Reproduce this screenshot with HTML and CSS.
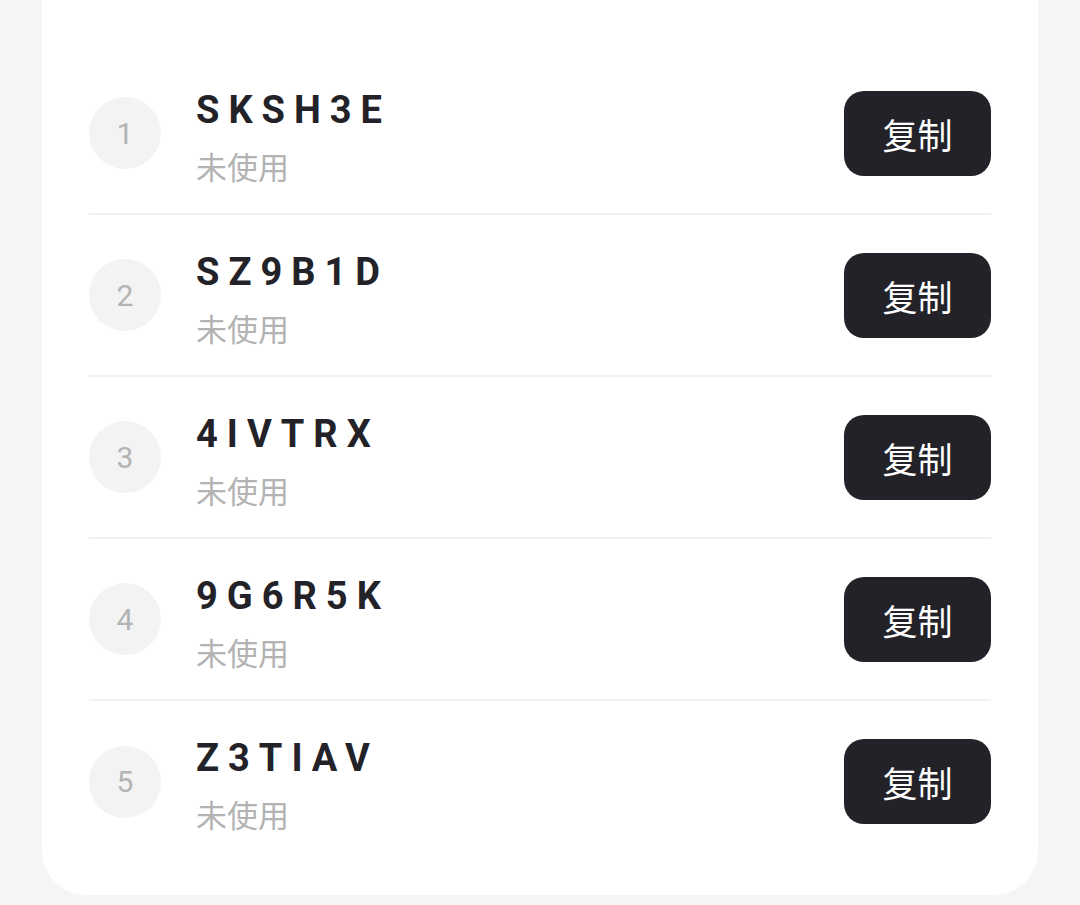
FILE: index.html
```html
<!DOCTYPE html>
<html lang="zh-CN">
<head>
  <meta charset="UTF-8">
  <meta name="viewport" content="width=device-width, initial-scale=1.0">
  <title>兑换码</title>
  <link rel="stylesheet" href="styles.css">
</head>
<body>

  <div class="card">
    <ul class="codes">
      <li class="code-row">
        <span class="num">1</span>
        <div class="info">
          <div class="code">SKSH3E</div>
          <div class="status">未使用</div>
        </div>
        <button class="copy">复制</button>
      </li>
      <li class="code-row">
        <span class="num">2</span>
        <div class="info">
          <div class="code">SZ9B1D</div>
          <div class="status">未使用</div>
        </div>
        <button class="copy">复制</button>
      </li>
      <li class="code-row">
        <span class="num">3</span>
        <div class="info">
          <div class="code">4IVTRX</div>
          <div class="status">未使用</div>
        </div>
        <button class="copy">复制</button>
      </li>
      <li class="code-row">
        <span class="num">4</span>
        <div class="info">
          <div class="code">9G6R5K</div>
          <div class="status">未使用</div>
        </div>
        <button class="copy">复制</button>
      </li>
      <li class="code-row">
        <span class="num">5</span>
        <div class="info">
          <div class="code">Z3TIAV</div>
          <div class="status">未使用</div>
        </div>
        <button class="copy">复制</button>
      </li>
    </ul>
  </div>

</body>
</html>
```

FILE: styles.css
```css
body {
  margin: 0;
  padding: 0 42px 10px;
  background-color: #f5f5f5;
  font-family: Roboto, "Noto Sans CJK SC", sans-serif;
}

.card {
  background-color: #fff;
  border-radius: 0 0 44px 44px;
  padding: 53px 47px 33px;
}

.codes {
  list-style: none;
  margin: 0;
  padding: 0;
}

.code-row {
  display: flex;
  align-items: center;
  height: 162px;
  border-bottom: 2px solid #f0f0f0;
  box-sizing: border-box;
}

.code-row:last-child {
  border-bottom: none;
  height: 161px;
}

.num {
  width: 72px;
  height: 72px;
  border-radius: 50%;
  background-color: #f3f3f3;
  color: #b3b3b3;
  font-size: 30px;
  display: flex;
  align-items: center;
  justify-content: center;
  flex-shrink: 0;
}

.info {
  flex: 1;
  margin-left: 35px;
  padding-top: 6px;
}

.code {
  font-size: 38px;
  line-height: 46px;
  font-weight: bold;
  letter-spacing: 9px;
  color: #222228;
}

.status {
  margin-top: 13px;
  font-family: "Noto Sans CJK SC", sans-serif;
  font-size: 31px;
  line-height: 40px;
  color: #b3b3b3;
}

.copy {
  width: 147px;
  height: 85px;
  border: none;
  border-radius: 20px;
  background-color: #222228;
  color: #fff;
  font-family: "Noto Sans CJK SC", sans-serif;
  font-size: 35px;
  cursor: pointer;
}
```
